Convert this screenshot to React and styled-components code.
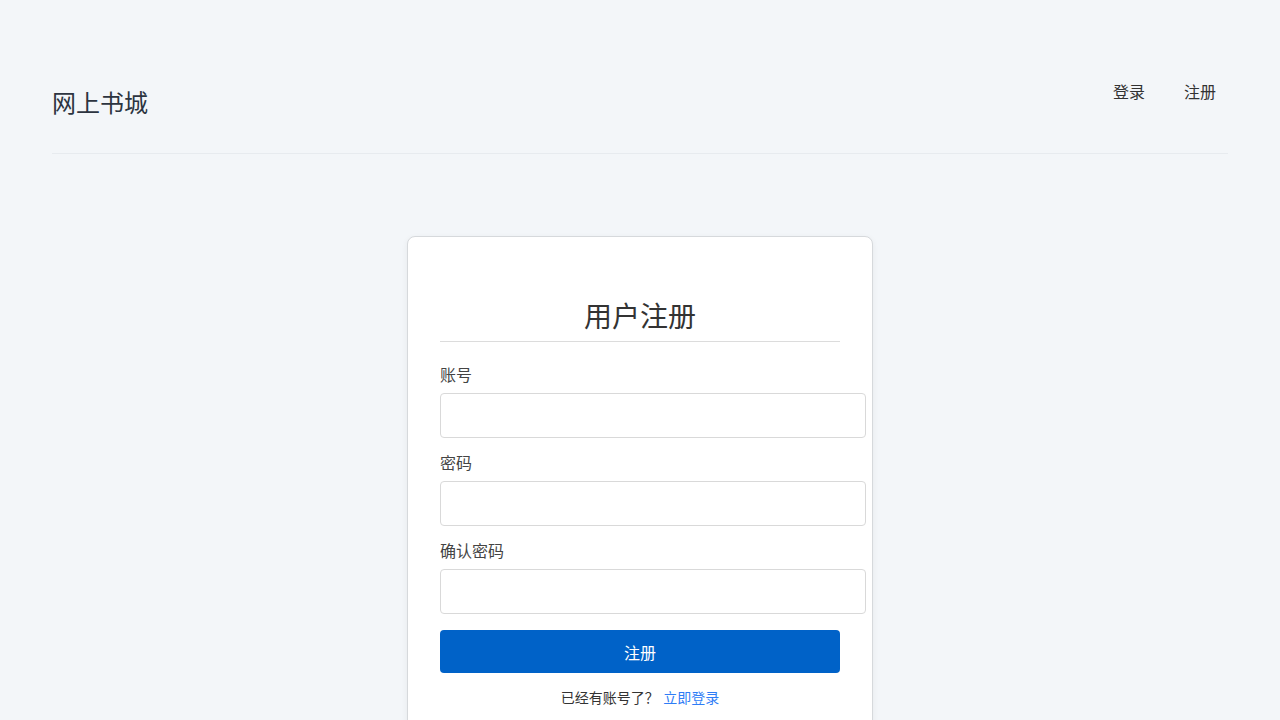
import React, { useState } from "react"
import styled, { createGlobalStyle } from "styled-components"

const GlobalStyle = createGlobalStyle`
  html, body {
    margin: 0;
    padding: 0;
    background: #f3f6f9;
    font-family: "DejaVu Sans", "Noto Sans CJK SC", sans-serif;
    color: #333;
  }
  * {
    box-sizing: border-box;
  }
`

const Page = styled.div`
  min-height: 720px;
  padding: 0 52px;
`

const Header = styled.header`
  display: flex;
  justify-content: space-between;
  align-items: flex-start;
  padding: 73px 0 33px;
  border-bottom: 1px solid #e7ebef;
`

const Brand = styled.h1`
  margin: 15px 0 0;
  font-size: 24px;
  line-height: 32px;
  font-weight: 400;
  color: #2c3440;
`

const Nav = styled.nav`
  display: flex;
  gap: 15px;
`

const NavLink = styled.a`
  padding: 8px 12px;
  font-size: 16px;
  line-height: 24px;
  color: #333;
  text-decoration: none;
  cursor: pointer;
`

const Main = styled.main`
  display: flex;
  justify-content: center;
  padding-top: 82px;
`

const Card = styled.div`
  width: 466px;
  padding: 32px 32px 24px;
  background: #fff;
  border: 1px solid #d6d9dc;
  border-radius: 8px;
  box-shadow: 0 2px 6px rgba(0, 0, 0, 0.06);
`

const Title = styled.h2`
  margin: 30px 0 22px;
  padding-bottom: 4px;
  font-size: 28px;
  line-height: 38px;
  font-weight: 400;
  text-align: center;
  color: #333;
  border-bottom: 1px solid #dcdcdc;
`

const Form = styled.form`
  display: flex;
  flex-direction: column;
`

const Field = styled.div`
  display: flex;
  flex-direction: column;
  margin-bottom: ${(p) => (p.$last ? "16px" : "14px")};
`

const Label = styled.label`
  font-size: 16px;
  line-height: 24px;
  margin-bottom: 5px;
  color: #444;
`

const Input = styled.input`
  box-sizing: content-box;
  width: 100%;
  height: 19px;
  padding: 12px;
  font-size: 16px;
  font-family: inherit;
  border: 1px solid #d9d9d9;
  border-radius: 4px;
  background: #fff;
  &:focus {
    outline: none;
    border-color: #0062c8;
  }
`

const SubmitButton = styled.button`
  width: 100%;
  height: 43px;
  border: none;
  border-radius: 4px;
  background: #0062c8;
  color: #fff;
  font-size: 16px;
  font-family: inherit;
  cursor: pointer;
`

const Footer = styled.p`
  margin: 15px 0 0;
  font-size: 14px;
  line-height: 20px;
  text-align: center;
  color: #333;
`

const FooterLink = styled.a`
  color: #2f7df6;
  text-decoration: none;
  cursor: pointer;
`

const fields = [
  { id: "username", label: "账号", type: "text" },
  { id: "password", label: "密码", type: "password" },
  { id: "confirm", label: "确认密码", type: "password" },
]

const App = () => {
  const [values, setValues] = useState({ username: "", password: "", confirm: "" })

  const handleSubmit = (e) => {
    e.preventDefault()
  }

  return (
    <>
      <GlobalStyle />
      <Page>
        <Header>
          <Brand>网上书城</Brand>
          <Nav>
            <NavLink>登录</NavLink>
            <NavLink>注册</NavLink>
          </Nav>
        </Header>
        <Main>
          <Card>
            <Title>用户注册</Title>
            <Form onSubmit={handleSubmit}>
              {fields.map((f, i) => (
                <Field key={f.id} $last={i === fields.length - 1}>
                  <Label htmlFor={f.id}>{f.label}</Label>
                  <Input
                    id={f.id}
                    type={f.type}
                    value={values[f.id]}
                    onChange={(e) => setValues({ ...values, [f.id]: e.target.value })}
                  />
                </Field>
              ))}
              <SubmitButton type="submit">注册</SubmitButton>
            </Form>
            <Footer>
              已经有账号了？ <FooterLink>立即登录</FooterLink>
            </Footer>
          </Card>
        </Main>
      </Page>
    </>
  )
}

export default App
